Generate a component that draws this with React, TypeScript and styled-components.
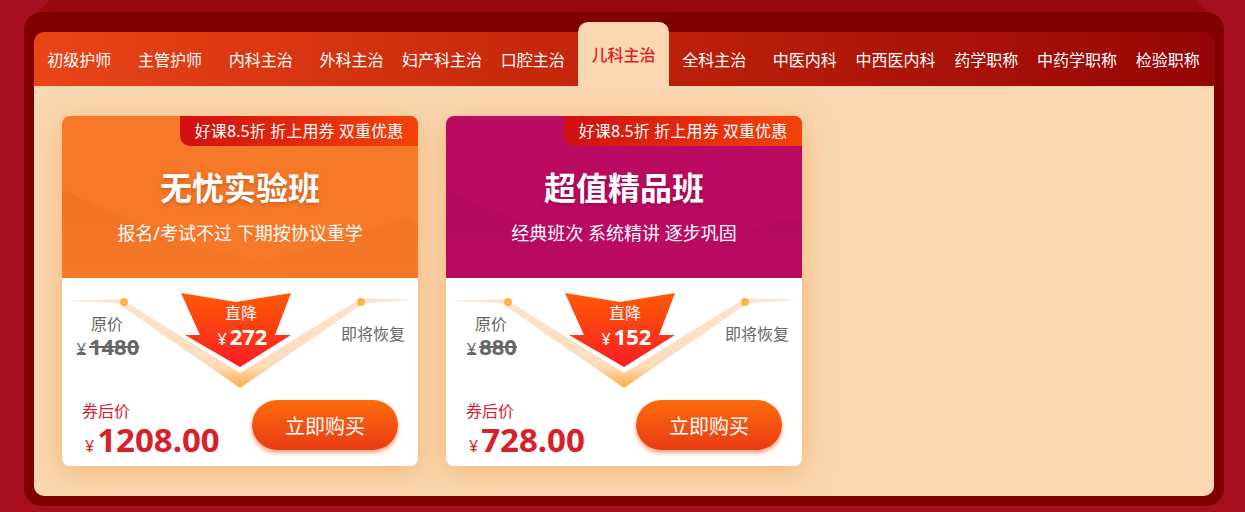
import React, { FC } from 'react'
import styled, { createGlobalStyle } from 'styled-components';

interface ICourse {
    title: string;
    desc: string;
    headColor: string;
    shapeColor: string;
    original: string;
    discount: string;
    price: string;
}

const tabs = ['初级护师', '主管护师', '内科主治', '外科主治', '妇产科主治', '口腔主治', '儿科主治', '全科主治', '中医内科', '中西医内科', '药学职称', '中药学职称', '检验职称'];

const courses: ICourse[] = [
    { title: '无忧实验班', desc: '报名/考试不过 下期按协议重学', headColor: '#f67828', shapeColor: '#e8621c', original: '1480', discount: '272', price: '1208.00' },
    { title: '超值精品班', desc: '经典班次 系统精讲 逐步巩固', headColor: '#bb0a62', shapeColor: '#a00460', original: '880', discount: '152', price: '728.00' },
];

const GlobalStyle = createGlobalStyle`
    html, body {
        margin: 0;
        padding: 0;
        background: #a80f1e;
    }
    body {
        font-family: "Noto Sans", "Noto Sans CJK SC", sans-serif;
    }
`

const Page = styled.div`
    position: relative;
    width: 1245px;
    height: 512px;
    padding: 12px 21px 6px 24px;
    box-sizing: border-box;
    overflow: hidden;

    &::before {
        content: "";
        position: absolute;
        top: 0;
        left: 36px;
        width: 1174px;
        height: 14px;
        background: #990909;
        clip-path: polygon(14px 0, 1160px 0, 100% 100%, 0 100%);
    }
`

const Frame = styled.div`
    position: relative;
    height: 100%;
    padding: 20px 10px 10px;
    box-sizing: border-box;
    background: #800000;
    border-radius: 18px;
    display: flex;
    flex-direction: column;
`

const Nav = styled.nav`
    height: 54px;
    flex: none;
    padding-right: 1px;
    display: grid;
    grid-template-columns: repeat(13, 1fr);
    background: linear-gradient(90deg, #ea4517 0%, #c1230a 50%, #960505 100%);
    border-radius: 10px 10px 0 0;
`

const Tab = styled.div<{ $active?: boolean }>`
    display: flex;
    align-items: center;
    justify-content: center;
    white-space: nowrap;
    font-size: 16px;
    font-weight: ${(p) => (p.$active ? 500 : 400)};
    color: ${(p) => (p.$active ? '#e0202a' : '#fff')};
    background: ${(p) => (p.$active ? '#fad7b0' : 'transparent')};
    border-radius: ${(p) => (p.$active ? '10px 10px 0 0' : '0')};
    margin-top: ${(p) => (p.$active ? '-10px' : '0')};
`

const Panel = styled.div`
    flex: 1;
    display: flex;
    gap: 28px;
    padding: 30px 28px;
    background: #fad7b0;
    border-radius: 0 0 10px 10px;
`

const Card = styled.div`
    width: 356px;
    height: 350px;
    display: flex;
    flex-direction: column;
    background: #fff;
    border-radius: 8px;
    box-shadow: 0 6px 26px rgba(248, 150, 60, 0.5);
    overflow: hidden;
`

const Head = styled.div<{ $color: string }>`
    position: relative;
    height: 162px;
    flex: none;
    display: flex;
    flex-direction: column;
    align-items: center;
    background: ${(p) => p.$color};
    color: #fff;
`

const HeadShape = styled.svg`
    position: absolute;
    left: 0;
    top: 0;
`

const Badge = styled.div`
    position: absolute;
    top: 0;
    right: 0;
    width: 238px;
    height: 30px;
    line-height: 30px;
    text-align: center;
    font-size: 16px;
    letter-spacing: 0.1px;
    white-space: nowrap;
    color: #fff;
    background: linear-gradient(90deg, #d01010, #f4430a);
    border-radius: 0 0 0 10px;
`

const Title = styled.h2`
    position: relative;
    margin: 52px 0 0;
    font-size: 32px;
    line-height: 40px;
    font-weight: 700;
    text-shadow: 0 2px 4px rgba(0, 0, 0, 0.2);
`

const Desc = styled.p`
    position: relative;
    margin: 12px 0 0;
    font-size: 18px;
    line-height: 26px;
`

const Body = styled.div`
    position: relative;
    flex: 1;
    display: flex;
    flex-direction: column;
`

const Chevron = styled.svg`
    position: absolute;
    left: 0;
    top: 0;
`

const TopRow = styled.div`
    position: relative;
    height: 122px;
    padding-top: 15px;
    box-sizing: border-box;
    display: grid;
    grid-template-columns: 90px 1fr 90px;
`

const Original = styled.div`
    margin-top: 21px;
    display: flex;
    flex-direction: column;
    align-items: center;
    color: #666;
`

const OriginalLabel = styled.div`
    font-size: 16px;
    line-height: 20px;
`

const OriginalPrice = styled.div`
    padding-left: 2px;
    font-size: 22px;
    line-height: 24px;
    font-weight: 700;
    text-decoration: line-through;
`

const Yen = styled.span<{ $size: number }>`
    font-size: ${(p) => p.$size}px;
    font-weight: 400;
    margin-right: 3px;
`

const Arrow = styled.div`
    position: relative;
    justify-self: center;
    width: 110px;
    height: 74px;
    margin-right: 8px;
    padding-left: 10px;
    box-sizing: border-box;
    display: flex;
    flex-direction: column;
    align-items: center;
    color: #fff;
`

const ArrowShape = styled.svg`
    position: absolute;
    left: 0;
    top: 0;
`

const ArrowLabel = styled.div`
    position: relative;
    margin-top: 9px;
    font-size: 16px;
    line-height: 22px;
`

const ArrowValue = styled.div`
    position: relative;
    margin: -2px 0 0 3px;
    font-size: 22px;
    line-height: 28px;
    font-weight: 700;
`

const Restore = styled.div`
    margin-top: 30px;
    padding-right: 13px;
    text-align: right;
    white-space: nowrap;
    font-size: 16px;
    line-height: 22px;
    color: #666;
`

const BottomRow = styled.div`
    position: relative;
    display: flex;
    justify-content: space-between;
    padding: 0 20px 0 20px;
`

const Final = styled.div`
    color: #d7202a;
`

const FinalLabel = styled.div`
    font-size: 16px;
    line-height: 22px;
`

const FinalPrice = styled.div`
    margin: -1px 0 0 3px;
    font-size: 33px;
    line-height: 38px;
    font-weight: 700;
    white-space: nowrap;
`

const BuyButton = styled.button`
    width: 146px;
    height: 50px;
    border: none;
    border-radius: 25px;
    font-family: inherit;
    font-size: 20px;
    color: #fff;
    background: linear-gradient(180deg, #ff6c0f, #e83a12);
    box-shadow: 0 3px 4px rgba(240, 90, 30, 0.55);
`

const CourseCard: FC<{ course: ICourse; index: number }> = ({ course, index }) => {
    const chevronId = `chevron-${index}`;
    const arrowId = `arrow-${index}`;
    const shapeId = `shape-${index}`;

    return (
        <Card>
            <Head $color={course.headColor}>
                <HeadShape width="356" height="162" viewBox="0 0 356 162">
                    <defs>
                        <linearGradient id={shapeId} x1="0" y1="0" x2="0" y2="1">
                            <stop offset="0" stopColor={course.shapeColor} stopOpacity="0.28" />
                            <stop offset="1" stopColor={course.shapeColor} stopOpacity="0.04" />
                        </linearGradient>
                    </defs>
                    <path d="M0 74 L120 126 L200 146 L345 102 L356 108 L356 162 L0 155 Z" fill={`url(#${shapeId})`} />
                </HeadShape>
                <Badge>好课8.5折 折上用券 双重优惠</Badge>
                <Title>{course.title}</Title>
                <Desc>{course.desc}</Desc>
            </Head>
            <Body>
                <Chevron width="356" height="120" viewBox="0 0 356 120">
                    <defs>
                        <linearGradient id={chevronId} x1="0" y1="0" x2="0" y2="1">
                            <stop offset="0" stopColor="#fde3cd" />
                            <stop offset="0.75" stopColor="#fddcbc" />
                            <stop offset="1" stopColor="#ffae45" />
                        </linearGradient>
                    </defs>
                    <path d="M0 23 L58 21 L58 25 Z" fill="#fde3cd" />
                    <path d="M352 22 L302 20 L302 25 Z" fill="#fde3cd" />
                    <path d="M64 24 L178 95 L293 24 L299 27 L178 110 L58 27 Z" fill={`url(#${chevronId})`} />
                    <circle cx="62" cy="24" r="4" fill="#ffb04a" />
                    <circle cx="299" cy="24" r="4" fill="#ffb04a" />
                </Chevron>
                <TopRow>
                    <Original>
                        <OriginalLabel>原价</OriginalLabel>
                        <OriginalPrice><Yen $size={16}>¥</Yen>{course.original}</OriginalPrice>
                    </Original>
                    <Arrow>
                        <ArrowShape width="110" height="74" viewBox="0 0 110 74">
                            <defs>
                                <linearGradient id={arrowId} x1="0" y1="0" x2="0" y2="1">
                                    <stop offset="0" stopColor="#ff5a05" />
                                    <stop offset="1" stopColor="#f51e24" />
                                </linearGradient>
                            </defs>
                            <path d="M0 0 L55 9 L110 0 L94 42 L110 42 L59 74 L4 42 L19 42 Z" fill={`url(#${arrowId})`} />
                        </ArrowShape>
                        <ArrowLabel>直降</ArrowLabel>
                        <ArrowValue><Yen $size={16}>¥</Yen>{course.discount}</ArrowValue>
                    </Arrow>
                    <Restore>即将恢复</Restore>
                </TopRow>
                <BottomRow>
                    <Final>
                        <FinalLabel>券后价</FinalLabel>
                        <FinalPrice><Yen $size={16}>¥</Yen>{course.price}</FinalPrice>
                    </Final>
                    <BuyButton>立即购买</BuyButton>
                </BottomRow>
            </Body>
        </Card>
    )
}

export default function App() {
    return (
        <React.Fragment>
            <GlobalStyle />
            <Page>
                <Frame>
                    <Nav>
                        {tabs.map((tab) => (
                            <Tab key={tab} $active={tab === '儿科主治'}>{tab}</Tab>
                        ))}
                    </Nav>
                    <Panel>
                        {courses.map((course, index) => (
                            <CourseCard key={course.title} course={course} index={index} />
                        ))}
                    </Panel>
                </Frame>
            </Page>
        </React.Fragment>
    )
}
